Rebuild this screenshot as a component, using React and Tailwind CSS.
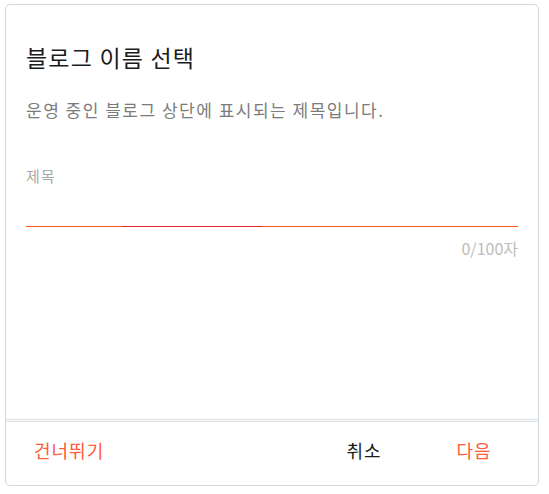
export default function App() {
  return (
    <div
      className="min-h-screen bg-white pt-[4px] pl-[5px]"
      style={{ fontFamily: '"Noto Sans CJK KR", "Noto Sans", sans-serif' }}
    >
      <div className="w-[534px] h-[482px] flex flex-col bg-white border border-[#cfd8de] rounded-[5px]">
        {/* body */}
        <div className="flex-1 px-5 pt-[37px] border-b border-[#dcdfe2]">
          <h2 className="text-[23px] leading-[30px] tracking-[1.2px] text-[#1b1b1b] font-normal">
            블로그 이름 선택
          </h2>
          <p className="mt-[25px] text-[17px] leading-[26px] tracking-[1.5px] text-[#7b7b7b]">
            운영 중인 블로그 상단에 표시되는 제목입니다.
          </p>

          <div className="mt-[43px]">
            <label className="block text-[15px] leading-[20px] tracking-[1px] text-[#a8a8a8]">
              제목
            </label>
            <input
              className="block w-full h-[40px] outline-none bg-transparent text-[16px]"
              type="text"
            />
            {/* focus underline, mid-animation */}
            <div className="flex h-px">
              <div className="w-[96px] bg-[#ff5722]" />
              <div className="w-[140px] bg-[#e8223a]" />
              <div className="flex-1 bg-[#ff5722]" />
            </div>
            <div className="mt-[10px] text-right text-[16px] leading-[22px] text-[#bdbdbd]">
              0/100자
            </div>
          </div>
        </div>

        {/* footer */}
        <div className="mt-px h-[64px] pb-[6px] flex items-center px-5 border-t border-[#dcdfe2] text-[18px] tracking-[1px]">
          <button className="px-2 text-[#ff5a3a]">건너뛰기</button>
          <div className="flex-1" />
          <button className="w-[88px] text-center text-[#1b1b1b]">취소</button>
          <button className="ml-[22px] w-[88px] text-center text-[#ff5a3a]">다음</button>
        </div>
      </div>
    </div>
  );
}
